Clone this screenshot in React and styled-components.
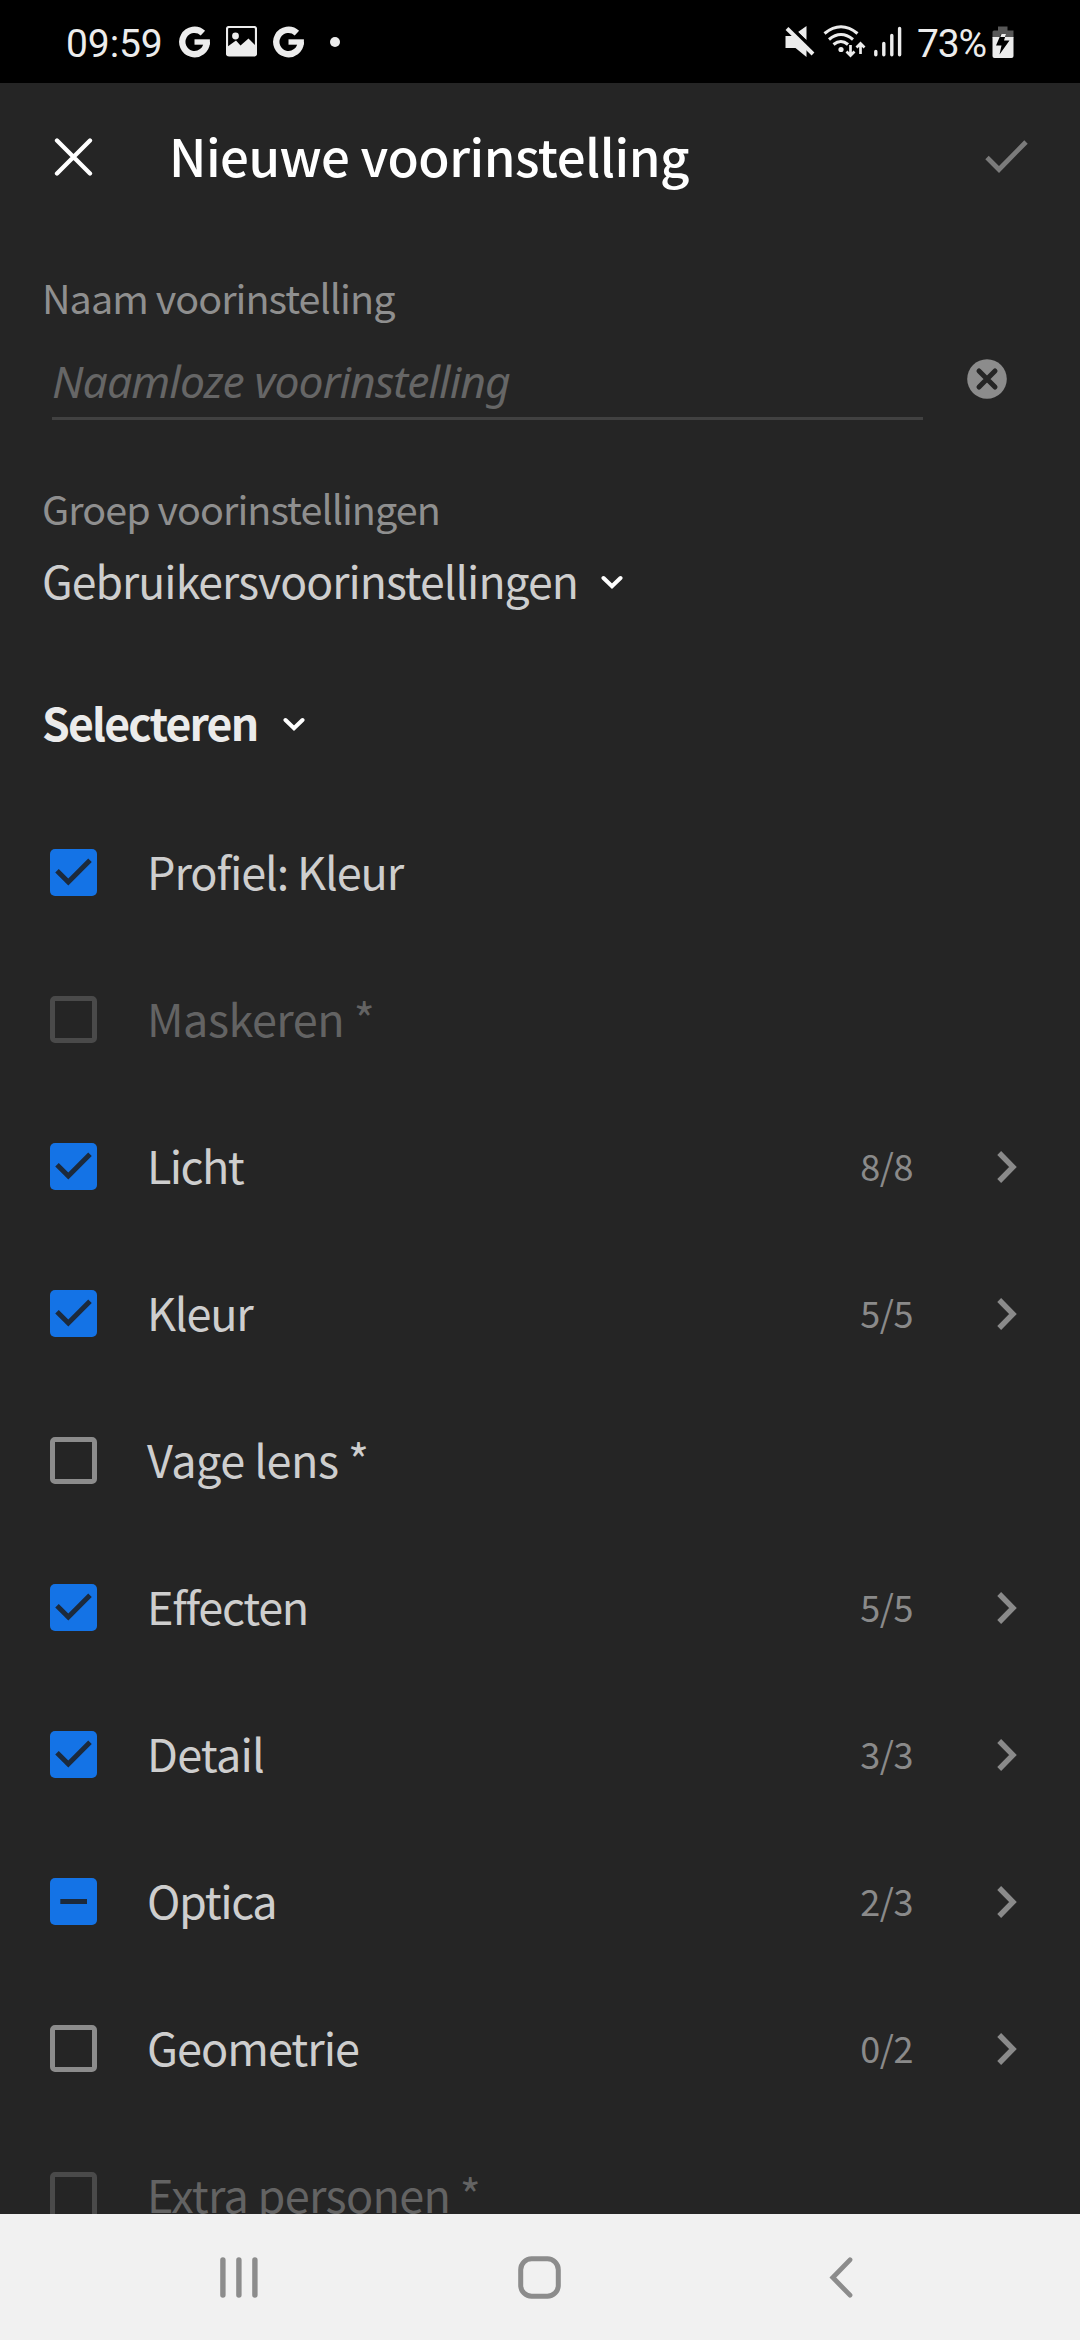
import React, { useState } from 'react';
import styled, { createGlobalStyle } from 'styled-components';

const GlobalStyle = createGlobalStyle`
  * {
    box-sizing: border-box;
  }
  body {
    margin: 0;
    background: #252525;
  }
  svg {
    display: block;
    flex: none;
  }
`;

const Screen = styled.div`
  width: 1080px;
  height: 2340px;
  display: flex;
  flex-direction: column;
  overflow: hidden;
  background: #252525;
  color: #cecece;
  font-family: 'Noto Sans CJK JP', 'Noto Sans', sans-serif;
`;

const StatusBar = styled.div`
  flex: none;
  height: 83px;
  padding: 0 66px;
  display: flex;
  align-items: center;
  justify-content: space-between;
  background: #000;
`;

const StatusGroup = styled.div`
  display: flex;
  align-items: center;
`;

const StatusIcons = styled(StatusGroup)`
  gap: ${props => props.$gap}px;
`;

const StatusText = styled.span`
  width: ${props => props.$width}px;
  margin-top: 4px;
  color: #ececec;
  font-family: Roboto, sans-serif;
  font-size: 39px;
  line-height: 46px;
  letter-spacing: ${props => props.$spacing}px;
  white-space: nowrap;
`;

const BatteryText = styled(StatusText)`
  margin-left: 7px;
`;

const Dot = styled.span`
  width: 10px;
  height: 10px;
  margin-left: 10px;
  border-radius: 50%;
  background: #ececec;
`;

const Header = styled.header`
  flex: none;
  height: 147px;
  padding: 0 52px 0 54px;
  display: flex;
  align-items: center;
`;

const Title = styled.h1`
  flex: 1;
  margin: 0 0 0 76px;
  padding-bottom: 4px;
  color: #fff;
  font-size: 51px;
  font-weight: 500;
  line-height: 64px;
  letter-spacing: -0.5px;
`;

const IconButton = styled.button`
  padding: 0;
  border: 0;
  background: none;
`;

const ClearButton = styled(IconButton)`
  align-self: flex-start;
  margin-top: 7px;
`;

const Form = styled.section`
  flex: none;
  height: 569px;
  padding: 0 42px;
  display: flex;
  flex-direction: column;
  align-items: flex-start;
`;

const FieldLabel = styled.label`
  margin-top: ${props => props.$top}px;
  color: #8f8f8f;
  font-size: 39.5px;
  line-height: 50px;
  letter-spacing: -0.95px;
`;

const NameRow = styled.div`
  width: 965px;
  margin-top: 30px;
  padding-left: 10px;
  display: flex;
  justify-content: space-between;
`;

const NameInput = styled.input`
  width: 871px;
  height: 68px;
  padding: 0 0 8px;
  border: 0;
  border-bottom: 3px solid #414141;
  outline: none;
  background: none;
  color: #cecece;
  font-family: 'Noto Sans', sans-serif;
  font-size: 44.5px;
  font-style: italic;
  letter-spacing: -0.9px;

  &::placeholder {
    color: #666;
    opacity: 1;
  }
`;

const Select = styled.button`
  margin: ${props => props.$top}px 0 0;
  padding: 0;
  display: flex;
  align-items: center;
  border: 0;
  background: none;
  color: ${props => (props.$bold ? '#ebebeb' : '#cecece')};
  font-family: inherit;
  font-size: 44.5px;
  font-weight: ${props => (props.$bold ? 700 : 400)};
  line-height: 60px;
  letter-spacing: ${props => (props.$bold ? -1.8 : -0.95)}px;

  svg {
    margin: 4px 0 0 ${props => props.$gap}px;
  }
`;

const List = styled.ul`
  flex: 1;
  min-height: 0;
  margin: 0;
  padding: 0;
  overflow: hidden;
  list-style: none;
`;

const Row = styled.li`
  height: 147px;
  padding: 0 63px 0 50px;
  display: flex;
  align-items: center;
`;

const Checkbox = styled.span`
  width: 47px;
  height: 47px;
  flex: none;
  display: flex;
  align-items: center;
  justify-content: center;
  border: ${props => (props.$filled ? 0 : 5)}px solid ${props => (props.$disabled ? '#4a4a4a' : '#8c8c8c')};
  border-radius: 5px;
  background: ${props => (props.$filled ? '#1473e6' : 'transparent')};
`;

const Label = styled.span`
  flex: 1;
  margin-left: 50px;
  padding-bottom: 3px;
  color: ${props => (props.$disabled ? '#636363' : '#cecece')};
  font-size: 45px;
  line-height: 60px;
  letter-spacing: ${props => props.$spacing}px;
`;

const Count = styled.span`
  padding-bottom: 4px;
  color: #8a8a8a;
  font-size: 36px;
  line-height: 50px;
  letter-spacing: -0.4px;
  margin-right: 84px;
`;

const NavBar = styled.nav`
  flex: none;
  height: 126px;
  padding: 0 88px;
  display: grid;
  grid-template-columns: repeat(3, 1fr);
  align-items: center;
  justify-items: center;
  background: #f1f1f1;
`;

const GoogleIcon = () => (
  <svg width="31" height="32" viewBox="-15.5 -16 31 32">
    <path d="M8.4 -8.9A12.2 12.2 0 1 0 12.2 0" fill="none" stroke="#ececec" strokeWidth="6.4" />
    <path d="M0 -2.7H15.4V2.7H0z" fill="#ececec" />
  </svg>
);

const PictureIcon = () => (
  <svg width="31" height="31" viewBox="0 0 31 31">
    <rect x="1" y="1" width="29" height="28.5" rx="2" fill="none" stroke="#ececec" strokeWidth="2.2" />
    <circle cx="9.5" cy="10" r="3.4" fill="#ececec" />
    <path d="M1 21L10 14.5L14.5 19.5L22.5 12.5L30 20V29H1z" fill="#ececec" />
  </svg>
);

const MuteIcon = () => (
  <svg width="30" height="32" viewBox="0 0 30 32" fill="#ececec">
    <path d="M0.5 10H8L21.5 20V31L10.5 22H0.5zM13 6L21.5 0V14z" />
    <path d="M4 -1L30 25" stroke="#000" strokeWidth="3" />
    <path d="M2 2.5L28 28" stroke="#ececec" strokeWidth="4" />
  </svg>
);

const WifiIcon = () => (
  <svg width="43" height="34" viewBox="0 0 43 34" fill="none" stroke="#ececec" strokeWidth="3.1">
    <path d="M1.5 8.5Q18 -5 34.5 8.5M6 14.5Q18 4.5 30 14.5M10.5 19.5Q18 13.5 25 19.5" />
    <circle cx="18" cy="24.5" r="2.6" fill="#ececec" stroke="none" />
    <path d="M27.5 20V30M23.5 26.5L27.5 30.5L31.5 26.5M37.5 29V19M33.5 22.5L37.5 18.5L41.5 22.5" strokeWidth="2.7" />
  </svg>
);

const SignalIcon = () => (
  <svg width="28" height="31" viewBox="0 0 28 31" stroke="#ececec" strokeWidth="3.4" strokeLinecap="round">
    <path d="M1.8 25.5V28.8M9.8 17.5V28.8M17.8 9.5V28.8M25.6 2.5V28.8" />
  </svg>
);

const BatteryIcon = () => (
  <svg width="22" height="34" viewBox="0 0 22 34">
    <path d="M6 1.5H15.5V5.5H21.5V13H0.5V7Q0.5 5.5 2 5.5H6z" fill="#575757" />
    <path d="M0.5 12H21.5V31Q21.5 33 19.5 33H2.5Q0.5 33 0.5 31z" fill="#ececec" />
    <path d="M9 9H14L12 15.5H17.5L7.5 29.5L9.5 20.5H4z" fill="#000" />
    <path d="M9.5 9H14L13 12H8.3z" fill="#ececec" />
  </svg>
);

const CloseIcon = () => (
  <svg width="39" height="38" viewBox="0 0 39 38">
    <path d="M3 2.5L36 35.5M36 2.5L3 35.5" stroke="#fff" strokeWidth="4.3" strokeLinecap="round" />
  </svg>
);

const ConfirmIcon = () => (
  <svg width="43" height="33" viewBox="0 0 43 33">
    <path d="M2 17.5L14 29.5L41 2" fill="none" stroke="#7b7b7b" strokeWidth="4.8" />
  </svg>
);

const ClearIcon = () => (
  <svg width="40" height="40" viewBox="0 0 40 40">
    <circle cx="20" cy="20" r="19.8" fill="#8c8c8c" />
    <path d="M12 12L28 28M28 12L12 28" stroke="#252525" strokeWidth="5" strokeLinecap="round" />
  </svg>
);

const ChevronDown = () => (
  <svg width="22" height="15" viewBox="0 0 22 15">
    <path d="M2.5 3L11 11.3L19.5 3" fill="none" stroke="#fff" strokeWidth="4" strokeLinecap="round" />
  </svg>
);

const ChevronRight = () => (
  <svg width="20" height="32" viewBox="0 0 20 32">
    <path d="M2.2 2L16 16L2.2 30" fill="none" stroke="#8a8a8a" strokeWidth="5.4" />
  </svg>
);

const CheckMark = () => (
  <svg width="47" height="47" viewBox="0 0 47 47">
    <path d="M7 21.7L18.3 33L40 11.3" fill="none" stroke="#1c2a3c" strokeWidth="5" />
  </svg>
);

const DashMark = () => (
  <svg width="47" height="47" viewBox="0 0 47 47">
    <path d="M10.3 23.5H37" stroke="#1c2a3c" strokeWidth="5" />
  </svg>
);

const settings = [
  { id: 'profile', label: 'Profiel: Kleur', state: 'on', spacing: -1.1 },
  { id: 'masking', label: 'Maskeren *', state: 'off', spacing: -0.5, disabled: true },
  { id: 'light', label: 'Licht', state: 'on', spacing: -1.6, count: '8/8' },
  { id: 'color', label: 'Kleur', state: 'on', spacing: -1.2, count: '5/5' },
  { id: 'blur', label: 'Vage lens *', state: 'off', spacing: -0.5 },
  { id: 'effects', label: 'Effecten', state: 'on', spacing: -1.3, count: '5/5' },
  { id: 'detail', label: 'Detail', state: 'on', spacing: -0.8, count: '3/3' },
  { id: 'optics', label: 'Optica', state: 'partial', spacing: -1.4, count: '2/3' },
  { id: 'geometry', label: 'Geometrie', state: 'off', spacing: -1, count: '0/2' },
  { id: 'people', label: 'Extra personen *', state: 'off', spacing: -0.7, disabled: true }
];

const SettingRow = ({ setting }) => (
  <Row>
    <Checkbox $filled={setting.state !== 'off'} $disabled={setting.disabled}>
      {setting.state === 'on' && <CheckMark />}
      {setting.state === 'partial' && <DashMark />}
    </Checkbox>
    <Label $disabled={setting.disabled} $spacing={setting.spacing}>
      {setting.label}
    </Label>
    {setting.count && (
      <>
        <Count>{setting.count}</Count>
        <ChevronRight />
      </>
    )}
  </Row>
);

const App = () => {
  const [name, setName] = useState('');

  return (
    <Screen>
      <GlobalStyle />
      <StatusBar>
        <StatusGroup>
          <StatusText $width={113} $spacing={-0.1}>
            09:59
          </StatusText>
          <StatusIcons $gap={16}>
            <GoogleIcon />
            <PictureIcon />
            <GoogleIcon />
            <Dot />
          </StatusIcons>
        </StatusGroup>
        <StatusGroup>
          <StatusIcons $gap={8}>
            <MuteIcon />
            <WifiIcon />
            <SignalIcon />
            <BatteryText $width={75} $spacing={-1.2}>
              73%
            </BatteryText>
          </StatusIcons>
          <BatteryIcon />
        </StatusGroup>
      </StatusBar>

      <Header>
        <IconButton aria-label="Sluiten">
          <CloseIcon />
        </IconButton>
        <Title>Nieuwe voorinstelling</Title>
        <IconButton aria-label="Opslaan">
          <ConfirmIcon />
        </IconButton>
      </Header>

      <Form>
        <FieldLabel $top={42} htmlFor="preset-name">
          Naam voorinstelling
        </FieldLabel>
        <NameRow>
          <NameInput id="preset-name" value={name} placeholder="Naamloze voorinstelling" onChange={e => setName(e.target.value)} />
          <ClearButton aria-label="Wissen" onClick={() => setName('')}>
            <ClearIcon />
          </ClearButton>
        </NameRow>
        <FieldLabel $top={63}>Groep voorinstellingen</FieldLabel>
        <Select $top={17} $gap={23}>
          Gebruikersvoorinstellingen
          <ChevronDown />
        </Select>
        <Select $top={82} $gap={26} $bold>
          Selecteren
          <ChevronDown />
        </Select>
      </Form>

      <List>
        {settings.map(setting => (
          <SettingRow key={setting.id} setting={setting} />
        ))}
      </List>

      <NavBar>
        <svg width="38" height="41" viewBox="0 0 38 41" stroke="#8c8c8c" strokeWidth="5.4" strokeLinecap="round">
          <path d="M2.9 3V38M18.9 3V38M34.9 3V38" />
        </svg>
        <svg width="43" height="43" viewBox="0 0 43 43">
          <rect x="2.7" y="2.7" width="37.6" height="37.6" rx="11" fill="none" stroke="#8c8c8c" strokeWidth="5" />
        </svg>
        <svg width="24" height="41" viewBox="0 0 24 41">
          <path d="M21 2.8L3.8 20.5L21 38.2" fill="none" stroke="#8c8c8c" strokeWidth="4.8" strokeLinecap="round" />
        </svg>
      </NavBar>
    </Screen>
  );
};

export default App;
